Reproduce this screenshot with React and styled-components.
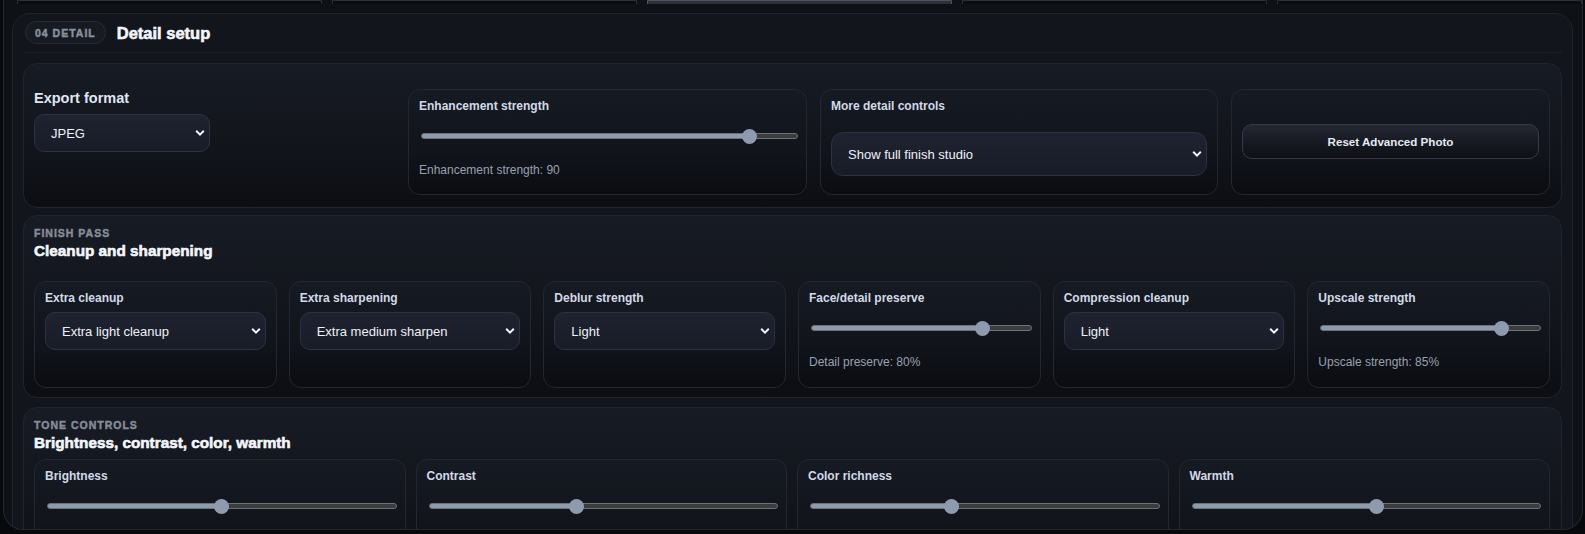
import React from 'react'
import styled, { createGlobalStyle } from 'styled-components'

const GlobalStyle = createGlobalStyle`
  html, body {
    margin: 0;
    background: #08090c;
  }
  body {
    font-family: "Liberation Sans", Arial, sans-serif;
    color: #e8ecf4;
  }
  * {
    box-sizing: border-box;
  }
`

const Screen = styled.div`
  width: 1585px;
  height: 534px;
  overflow: hidden;
  padding: 0 2px 4px 3px;
`
const Panel = styled.div`
  height: 100%;
  display: flex;
  flex-direction: column;
  border: 1px solid #232831;
  border-top: none;
  border-radius: 0 0 20px 20px;
  background: #0e1116;
  padding: 0 9px 0 8px;
  overflow: hidden;
`

// bottoms of the step tabs that sit above this section
const StepStrip = styled.div`
  flex: 0 0 4px;
  height: 4px;
  margin: 0 -9px 0 5px;
  display: grid;
  grid-template-columns: repeat(5, 1fr);
  gap: 10px;
  align-items: end;
  overflow: hidden;
`
const Step = styled.div`
  height: 30px;
  border: 1px solid ${p => (p.$active ? '#4d535f' : '#2b2f38')};
  border-radius: 0 0 8px 8px;
  background: ${p => (p.$active ? '#2c3039' : '#0a0c10')};
`

const Section = styled.section`
  margin-top: 9px;
  flex: 1 0 auto;
  display: flex;
  flex-direction: column;
  border: 1px solid #1e232c;
  border-radius: 18px;
  background: #12151c;
  padding: 7px 10px 0 10px;
`
const Header = styled.div`
  display: flex;
  align-items: center;
  gap: 11px;
  padding: 0 0 8px 2px;
  border-bottom: 1px solid #1d212a;
`
const Pill = styled.span`
  height: 23px;
  display: inline-flex;
  align-items: center;
  padding: 0 9px;
  border: 1px solid #272c36;
  border-radius: 999px;
  background: #161a21;
  color: #8a909e;
  font-size: 10.5px;
  font-weight: 700;
  letter-spacing: 1px;
  -webkit-text-stroke: 0.45px #8a909e;
`
const Title = styled.h2`
  margin: 0;
  font-size: ${p => p.$size || 15.3}px;
  line-height: 18px;
  font-weight: 700;
  color: #f4f6fa;
  -webkit-text-stroke: 0.6px #f4f6fa;
`

const Group = styled.div`
  margin-top: ${p => p.$space}px;
  border: 1px solid #1f242d;
  border-radius: 14px;
  background: linear-gradient(180deg, #171b23 0%, #12151c 55%, #0c0e13 100%);
  padding: ${p => p.$pad || '11px 11px 9px 10px'};
`
const Kicker = styled.div`
  font-size: 10.5px;
  line-height: 12px;
  font-weight: 700;
  letter-spacing: 1px;
  text-transform: uppercase;
  color: #868c9a;
  -webkit-text-stroke: 0.45px #868c9a;
  margin-bottom: 3px;
`
const Grid = styled.div`
  display: grid;
  grid-template-columns: ${p => p.$cols};
  gap: ${p => p.$gap}px;
  margin-top: ${p => p.$top || 0}px;
`
const Card = styled.div`
  height: ${p => p.$h || 107}px;
  display: flex;
  flex-direction: column;
  justify-content: ${p => (p.$center ? 'center' : 'flex-start')};
  border: 1px solid #222731;
  border-radius: 12px;
  background: linear-gradient(180deg, #161a22 0%, #11141b 60%, #0a0c11 100%);
  padding: 8px 10px 10px 10px;
`
const Field = styled.div`
  display: flex;
  flex-direction: column;
  align-items: flex-start;
`
const BigLabel = styled.label`
  font-size: 14.5px;
  line-height: 18px;
  font-weight: 700;
  color: #dfe5f2;
  margin-bottom: 7px;
`
const Label = styled.label`
  font-size: 12px;
  line-height: 16px;
  font-weight: 700;
  color: #d3d9e8;
  margin-bottom: ${p => p.$gap ?? 6}px;
`
const Note = styled.div`
  margin-top: 19px;
  font-size: 12px;
  line-height: 14px;
  color: #99a1b1;
`

const SelectWrap = styled.div`
  position: relative;
  width: ${p => p.$w || '100%'};
`
const SelectBox = styled.select`
  appearance: none;
  width: 100%;
  height: ${p => p.$h || 38}px;
  padding: 0 26px 0 16px;
  border: 1px solid #2c3241;
  border-radius: ${p => p.$r || 10}px;
  background: linear-gradient(180deg, #1f2331 0%, #181c27 100%);
  color: #eef1f7;
  font-family: "Liberation Sans", Arial, sans-serif;
  font-size: 13px;
  outline: none;
`
const Chevron = styled.svg`
  position: absolute;
  right: 5px;
  top: 50%;
  transform: translateY(-50%);
  pointer-events: none;
`

const Range = styled.input`
  appearance: none;
  width: 100%;
  height: 16px;
  margin: 14px 0 0 2px;
  background: transparent;

  &::-webkit-slider-runnable-track {
    height: 6px;
    border: 1px solid #6f7176;
    border-radius: 5px;
    background: linear-gradient(
      90deg,
      #8e9aae 0,
      #8e9aae ${p => p.$stop},
      #3b3c3e ${p => p.$stop}
    );
  }
  &::-webkit-slider-thumb {
    appearance: none;
    width: 15px;
    height: 15px;
    margin-top: -5.5px;
    border-radius: 50%;
    background: #8e9aae;
    border: none;
  }
`

const Button = styled.button`
  width: 100%;
  height: 35px;
  border: 1px solid #363b47;
  border-radius: 10px;
  background: linear-gradient(180deg, #242833 0%, #171a22 50%, #0e1015 100%);
  color: #e6eaf2;
  font-family: "Liberation Sans", Arial, sans-serif;
  font-size: 11.6px;
  font-weight: 700;
`

const Select = ({ value, w, h, r }) => (
  <SelectWrap $w={w}>
    <SelectBox $h={h} $r={r} defaultValue={value}>
      <option>{value}</option>
    </SelectBox>
    <Chevron width="10" height="7" viewBox="0 0 10 7">
      <path d="M1.2 1.3 5 5.1 8.8 1.3" fill="none" stroke="#f2f4f8" strokeWidth="2" />
    </Chevron>
  </SelectWrap>
)

const Slider = ({ value, min = 0, max = 100 }) => {
  const frac = (value - min) / (max - min)
  return (
    <Range
      type="range"
      min={min}
      max={max}
      defaultValue={value}
      $stop={`calc(7.5px + ${frac.toFixed(3)} * (100% - 15px))`}
    />
  )
}

const SelectCard = ({ label, value }) => (
  <Card>
    <Label>{label}</Label>
    <Select value={value} />
  </Card>
)

const SliderCard = ({ label, value, min, max, note, h }) => (
  <Card $h={h}>
    <Label $gap={0}>{label}</Label>
    <Slider value={value} min={min} max={max} />
    {note && <Note>{note}</Note>}
  </Card>
)

const steps = [false, false, true, false, false]

const finishPass = [
  { kind: 'select', label: 'Extra cleanup', value: 'Extra light cleanup' },
  { kind: 'select', label: 'Extra sharpening', value: 'Extra medium sharpen' },
  { kind: 'select', label: 'Deblur strength', value: 'Light' },
  { kind: 'slider', label: 'Face/detail preserve', value: 80, note: 'Detail preserve: 80%' },
  { kind: 'select', label: 'Compression cleanup', value: 'Light' },
  { kind: 'slider', label: 'Upscale strength', value: 85, note: 'Upscale strength: 85%' },
]

const tones = [
  { label: 'Brightness', value: 50 },
  { label: 'Contrast', value: 42 },
  { label: 'Color richness', value: 40 },
  { label: 'Warmth', value: 53 },
]

export default function App() {
  return (
    <>
      <GlobalStyle />
      <Screen>
        <Panel>
          <StepStrip>
            {steps.map((active, i) => (
              <Step key={i} $active={active} />
            ))}
          </StepStrip>

          <Section>
            <Header>
              <Pill>04 DETAIL</Pill>
              <Title $size={16.5}>Detail setup</Title>
            </Header>

            <Group $space={10} $pad="25px 11px 12px 10px">
              <Grid $cols="361fr 399fr 398fr 319fr" $gap={13}>
                <Field>
                  <BigLabel>Export format</BigLabel>
                  <Select value="JPEG" w="176px" />
                </Field>
                <SliderCard
                  h={106}
                  label="Enhancement strength"
                  value={90}
                  min={10}
                  max={100}
                  note="Enhancement strength: 90"
                />
                <Card $h={106}>
                  <Label $gap={18}>More detail controls</Label>
                  <Select value="Show full finish studio" h={44} r={12} />
                </Card>
                <Card $h={106} $center>
                  <Button>Reset Advanced Photo</Button>
                </Card>
              </Grid>
            </Group>

            <Group $space={7}>
              <Kicker>Finish pass</Kicker>
              <Title>Cleanup and sharpening</Title>
              <Grid $cols="repeat(6, 1fr)" $gap={12} $top={21}>
                {finishPass.map(item =>
                  item.kind === 'select' ? (
                    <SelectCard key={item.label} label={item.label} value={item.value} />
                  ) : (
                    <SliderCard
                      key={item.label}
                      label={item.label}
                      value={item.value}
                      note={item.note}
                    />
                  )
                )}
              </Grid>
            </Group>

            <Group $space={9}>
              <Kicker>Tone controls</Kicker>
              <Title>Brightness, contrast, color, warmth</Title>
              <Grid $cols="repeat(4, 1fr)" $gap={10} $top={7}>
                {tones.map(t => (
                  <SliderCard key={t.label} label={t.label} value={t.value} />
                ))}
              </Grid>
            </Group>
          </Section>
        </Panel>
      </Screen>
    </>
  )
}
